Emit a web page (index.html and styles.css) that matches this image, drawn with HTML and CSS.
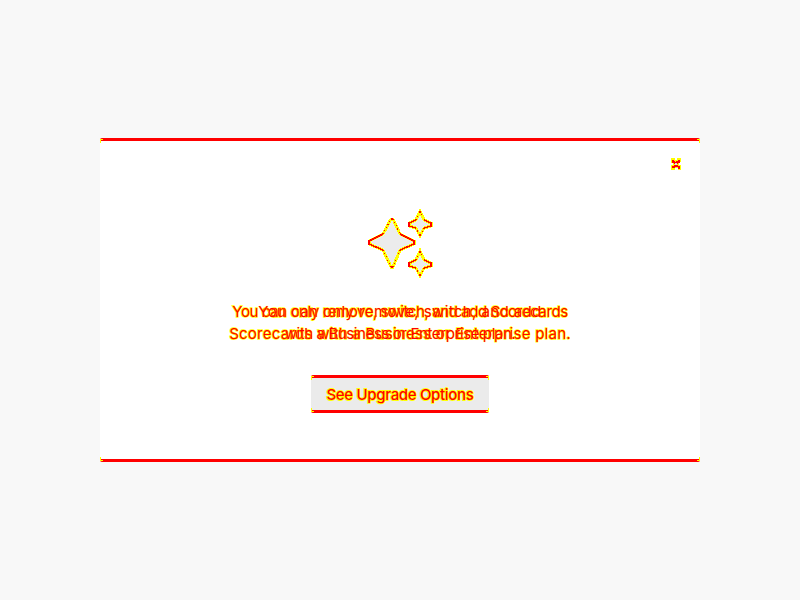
FILE: index.html
```
<!DOCTYPE html>
<html lang="en">
<head>
<meta charset="utf-8">
<title>Upgrade</title>
<link rel="stylesheet" href="styles.css">
</head>
<body>
<main class="dialog">
  <i class="corner tl"></i><i class="corner tr"></i><i class="corner bl"></i><i class="corner br"></i>
  <button class="close" aria-label="Close">
    <svg width="10" height="12" viewBox="0 0 10 12" shape-rendering="crispEdges"><path d="M0 0h4v2h2V0h4v4H8v3h2v5H7v-2H4v2H0V7h2V5H0z" fill="#ff0"/><path d="M1 2h2v1h1v1h1V3h2V2h2v3H7v1H3V5H1zM1 8h2V7h4v1h2v3H7V9H4v1H1z" fill="red"/><path d="M4 5h2v2H4z" fill="#ddd"/></svg>
  </button>
  <svg class="sparkles" width="66" height="70" viewBox="0 0 66 70" shape-rendering="crispEdges">
    <g class="halo">
      <path d="M24 10H26L33 25 47 32V35L33 41 26 58H24L16 41 2 35V32L16 25z"/>
      <path d="M53 2L57 11 64 14V17L57 19 53 27 49 19 42 17V14L49 11z"/>
      <path d="M53 42L57 51 64 54V57L57 59 53 67 49 59 42 57V54L49 51z"/>
    </g>
    <g class="edge">
      <path d="M24 10H26M33 25L47 32V35L33 41M26 58H24M16 41L2 35V32L16 25"/>
      <path d="M57 11L64 14V17L57 19M49 19L42 17V14L49 11M53 2v2M53 25v2"/>
      <path d="M57 51L64 54V57L57 59M49 59L42 57V54L49 51M53 42v2M53 65v2"/>
    </g>
    <g class="dots">
      <path d="M26 10L33 25M33 41L26 58M24 58L16 41M16 25L24 10"/>
      <path d="M53 2L57 11M57 19L53 27 49 19M49 11L53 2"/>
      <path d="M53 42L57 51M57 59L53 67 49 59M49 51L53 42"/>
    </g>
  </svg>
  <div class="message">
    <p class="wide"><span class="tight">You can only remove, switch, and add Scorecards</span><br><span class="loose">Scorecards with a Business or Enterprise plan.</span></p>
    <p class="narrow"><span class="spread">You can only remove, switch, and add</span><br><span class="tight">with a Business or Enterprise plan.</span></p>
  </div>
  <button class="upgrade"><i class="corner tl"></i><i class="corner tr"></i><i class="corner bl"></i><i class="corner br"></i>See Upgrade Options</button>
</main>
</body>
</html>
```
FILE: styles.css
```
*{box-sizing:border-box}
body{margin:0;height:600px;background:#f8f8f8;display:flex;align-items:center;justify-content:center;font-family:Inter,sans-serif}
.dialog{position:relative;width:600px;height:324px;background:#fff;border:solid red;border-width:3px 0;border-radius:2px;display:flex;flex-direction:column;align-items:center}
.close{position:absolute;right:19px;top:17px;padding:0;border:0;background:none;line-height:0}
.sparkles{margin-top:68px}
.sparkles path{vector-effect:non-scaling-stroke}
.halo{fill:#ececec;stroke:#ff0;stroke-width:3px}
.edge{fill:none;stroke:red;stroke-width:1.4px}
.dots{fill:none;stroke:red;stroke-width:1px;stroke-dasharray:1.2 2.3}
.message{display:grid;margin-top:22px;text-align:center;font-size:15px;line-height:22px;color:red;white-space:nowrap}
.message p{grid-area:1/1;margin:0}
.wide{-webkit-text-stroke:1.4px #ff0;paint-order:stroke fill}
.narrow{text-shadow:0 0 1px #ff0}
.tight{letter-spacing:-.4px}
.loose{letter-spacing:.26px}
.spread{letter-spacing:.4px}
.upgrade{position:relative;margin-top:30px;width:178px;height:38px;border:solid red;border-width:3px 0;border-radius:2px;background:#ebebeb;color:red;font:500 15px Inter,sans-serif;letter-spacing:-.32px;padding:0;-webkit-text-stroke:1.8px #ff0;paint-order:stroke fill}
.corner{position:absolute;width:1px;height:4px;background:#ff0}
.corner::after{content:"";position:absolute;width:3px;height:1px;background:#ff0}
.tl{left:0;top:-2px}.tr{right:0;top:-2px}.bl{left:0;bottom:-2px}.br{right:0;bottom:-2px}
.tl::after{left:0;top:0}.tr::after{right:0;top:0}.bl::after{left:0;bottom:0}.br::after{right:0;bottom:0}
```
